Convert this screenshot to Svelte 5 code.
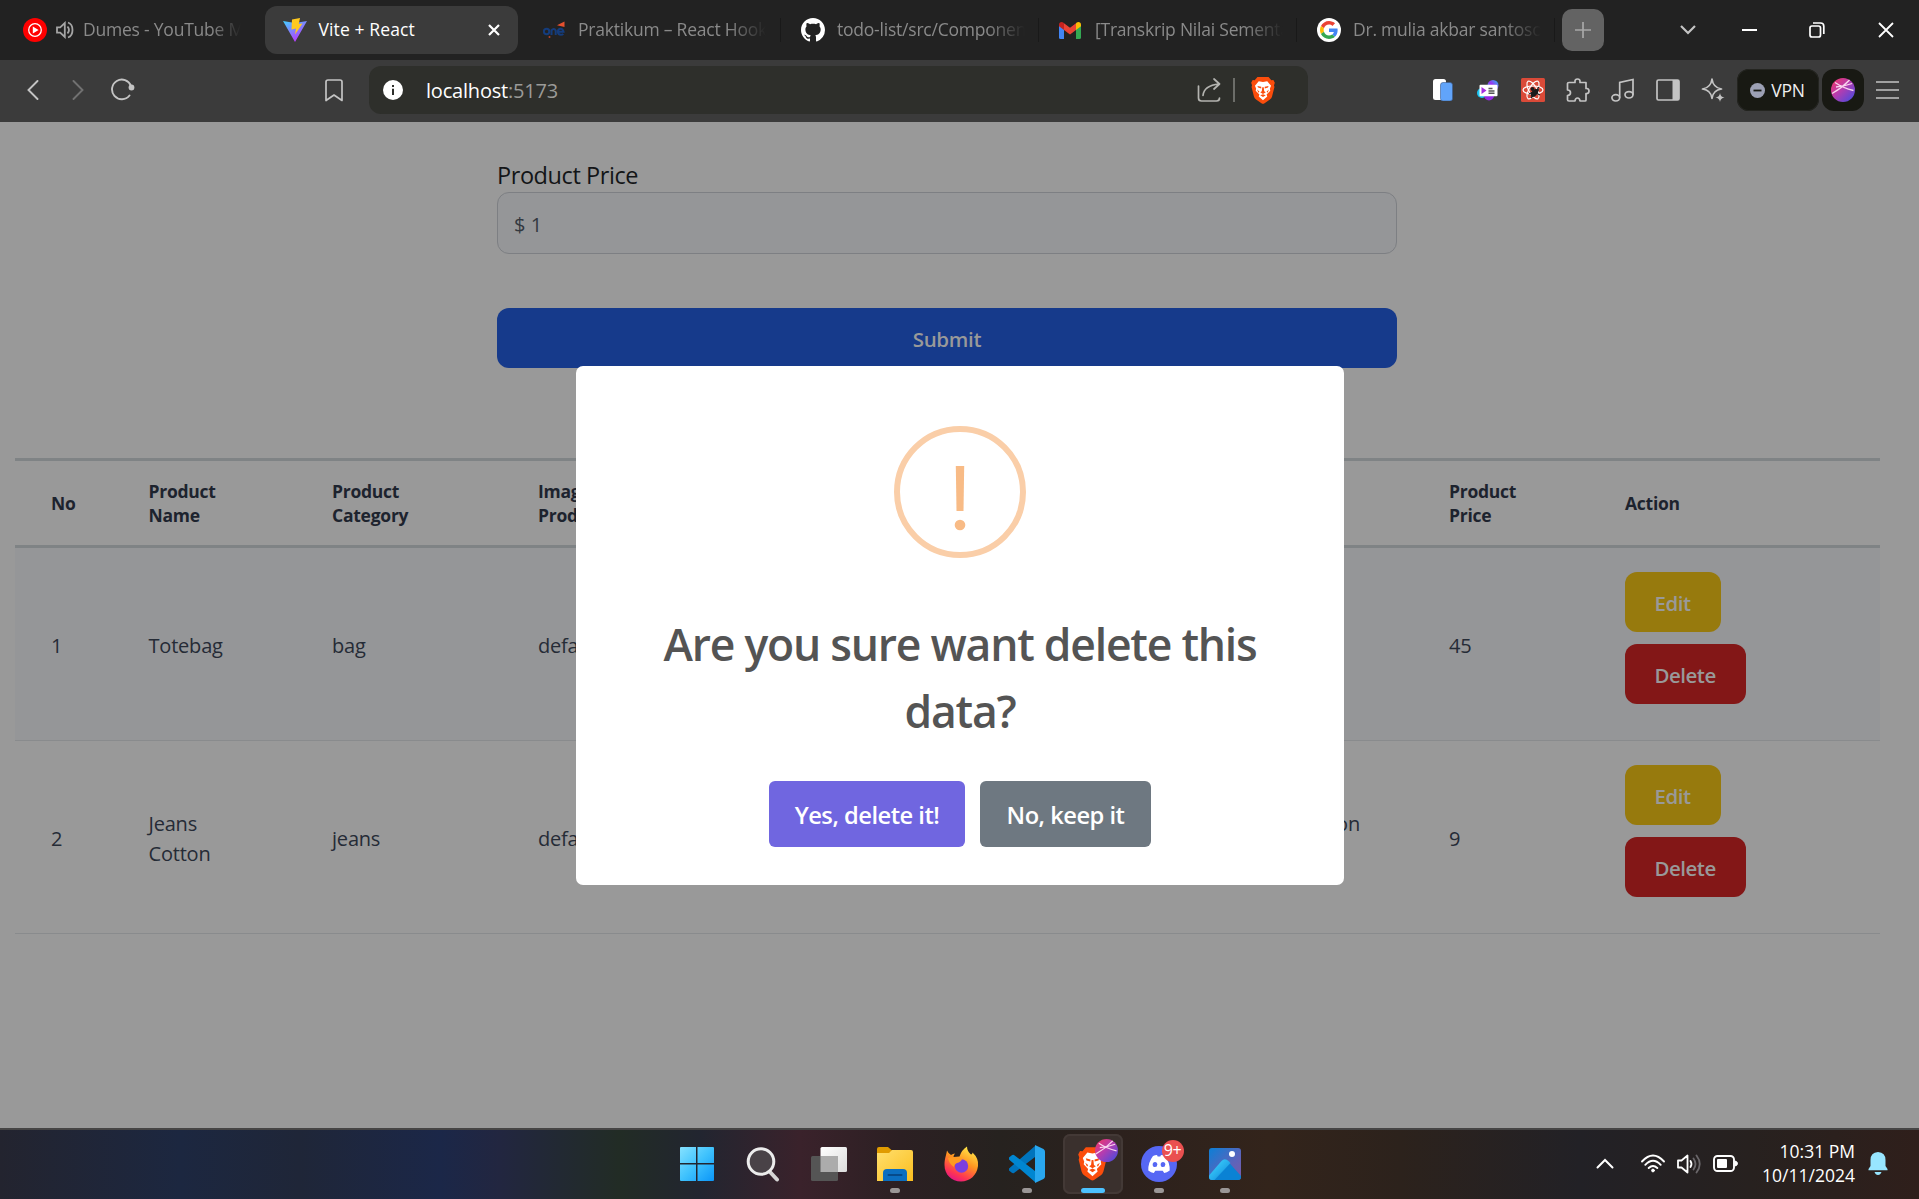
<script lang="ts">
  const tabs = [
    { icon: 'yt', title: 'Dumes - YouTube M', cls: 'first' },
    { icon: 'vite', title: 'Vite + React', cls: 'active' },
    { icon: 'one', title: 'Praktikum – React Hook', cls: 't3' },
    { icon: 'github', title: 'todo-list/src/Componen', cls: 't4' },
    { icon: 'gmail', title: '[Transkrip Nilai Sementa', cls: 't5' },
    { icon: 'google', title: 'Dr. mulia akbar santoso', cls: 't6' }
  ];
  const rows = [
    { no: 1, name: ['Totebag'], category: 'bag', image: 'default.jpg', desc: ['Bag'], price: 45 },
    { no: 2, name: ['Jeans', 'Cotton'], category: 'jeans', image: 'default.jpg', desc: ['Jeans cotton', 'fabric'], price: 9 }
  ];
  const apps = ['windows', 'search', 'taskview', 'folder', 'firefox', 'vscode', 'brave', 'discord', 'photos'];
  const running = ['folder', 'vscode', 'discord', 'photos'];
</script>

{#snippet lion()}
  <path d="M7 1h12l3 3.4 2.2-.2 1.6 3-.9 2.6.5 2-2.6 10.300q-.6 2-2.300 3.200l-5.800 4q-1.700 1.200-3.400 0l-5.800-4q-1.700-1.200-2.300-3.200L.6 11.800l.5-2L.2 7.200l1.600-3 2.200.2z" fill="#fb4d0c" />
  <path d="M8.400 5.600l4.600.8 4.600-.8 4.100 4.800-1.300 3.200.5 2.100-4 4.200.7 2.100-4.600 4.200L8.400 22l.7-2.100-4-4.200.5-2.100-1.300-3.200z" fill="#fff" />
  <path d="M7 10.600l4.100 1v1.700L7.600 12.400zM19 10.600l-4.100 1v1.700l3.500-.9zM12.200 12h1.600l.5 4.400 1.700 1-3 1.800-3-1.800 1.700-1zM6.500 14.500l2.600 2-1 1.400zM19.500 14.500l-2.600 2 1 1.400zM10 20.700l3-1.200 3 1.200-3 2z" fill="#fb4d0c" />
{/snippet}

{#snippet globe()}
  <circle cx="12" cy="12" r="12" fill="url(#orb)" />
  <path d="M4 4.500Q12 10 22.500 12.500M18.500 2Q11 10 1 15.500M5 9Q13 8.500 21 5.500" fill="none" stroke="#f9d3ee" stroke-width="1.300" />
{/snippet}

<svg class="defs" width="0" height="0" aria-hidden="true">
  <defs>
    <linearGradient id="orb" x1="0" y1="0" x2="1" y2="1"><stop offset="0" stop-color="#f5365f" /><stop offset=".45" stop-color="#b83cae" /><stop offset="1" stop-color="#3b4ce4" /></linearGradient>
    <linearGradient id="vt" x1="0" y1="0" x2=".6" y2="1"><stop offset="0" stop-color="#41d1ff" /><stop offset="1" stop-color="#bd34fe" /></linearGradient>
    <linearGradient id="win" x1="0" y1="0" x2="1" y2="1"><stop offset="0" stop-color="#86e2ff" /><stop offset=".5" stop-color="#3fc2fd" /><stop offset="1" stop-color="#0b96f8" /></linearGradient>
    <linearGradient id="fold" x1="0" y1="0" x2="1" y2="1"><stop offset="0" stop-color="#ffdf6d" /><stop offset="1" stop-color="#fbbe1f" /></linearGradient>
    <linearGradient id="fox" x1=".8" y1="0" x2=".3" y2="1"><stop offset="0" stop-color="#fff14d" /><stop offset=".45" stop-color="#ff9420" /><stop offset=".8" stop-color="#ff3651" /><stop offset="1" stop-color="#e31587" /></linearGradient>
    <linearGradient id="ph" x1="0" y1="0" x2="1" y2="1"><stop offset="0" stop-color="#0b7fd6" /><stop offset=".6" stop-color="#5c64bb" /><stop offset="1" stop-color="#7b5aa8" /></linearGradient>
    <linearGradient id="hill" x1="0" y1="0" x2="1" y2="1"><stop offset="0" stop-color="#45dcff" /><stop offset=".55" stop-color="#25acec" /><stop offset="1" stop-color="#0a6fc6" /></linearGradient>
    <linearGradient id="wht" x1="0" y1="0" x2="1" y2="1"><stop offset="0" stop-color="#ffffff" /><stop offset="1" stop-color="#dcdcdc" /></linearGradient>
    <linearGradient id="ext" x1="0" y1="1" x2="1" y2="0"><stop offset="0" stop-color="#12d5f5" /><stop offset=".5" stop-color="#9a2ff0" /><stop offset="1" stop-color="#20c7f5" /></linearGradient>
  </defs>
</svg>

<div class="screen">
  <header class="tabbar">
    {#each tabs as tab}
      <div class="slot {tab.cls}">
        <div class="tab">
          <span class="fav">
            {#if tab.icon === 'yt'}
              <svg width="24" height="24" viewBox="0 0 24 24"><circle cx="12" cy="12" r="12" fill="#f00" /><circle cx="12" cy="12" r="6.300" fill="none" stroke="#fff" stroke-width="1.300" /><path d="M9.800 8.400v7.200L15.600 12z" fill="#fff" /></svg>
              <svg class="speaker" width="18" height="18" viewBox="0 0 18 18" fill="none" stroke="#a5a5a5" stroke-width="1.800"><path d="M1 6.300h3.200L8.800 2v14l-4.600-4.300H1z" /><path d="M11.500 5.500q3 3.500 0 7" /><path d="M12 1.500c6 2 6 13 0 15" /></svg>
            {:else if tab.icon === 'vite'}
              <svg width="24" height="24" viewBox="0 0 24 24"><path d="M0 3l12 2L24 3 12 24z" fill="url(#vt)" /><path d="M9 1.500L17 0l-1.200 6 3.700-.6L12 16.500l1-6-4.500 1z" fill="#ffc91f" /></svg>
            {:else if tab.icon === 'one'}
              <svg width="22" height="18" viewBox="0 0 22 18"><g fill="none" stroke="#143c7c" stroke-width="2"><circle cx="3.600" cy="10.500" r="2.700" /><path d="M8.500 14V9.300q2.500-2.600 4.200.3V14M15 10.700h5.500q-.6-3.200-3-3-2.600.2-2.600 3 .1 3 3 3.100 1.500 0 2.400-1" /></g><path d="M14 4.200L21.500.5V6z" fill="#e5502f" /><circle cx="6.500" cy="16" r="1" fill="#b64329" /></svg>
            {:else if tab.icon === 'github'}
              <svg width="24" height="24" viewBox="0 0 16 16"><path fill="#fff" d="M8 0C3.580 0 0 3.580 0 8c0 3.540 2.290 6.530 5.470 7.590.4.070.55-.17.55-.38 0-.19-.01-.82-.01-1.490-2.010.37-2.530-.49-2.690-.94-.09-.23-.48-.94-.82-1.130-.28-.15-.68-.52-.01-.53.63-.01 1.080.58 1.230.82.72 1.210 1.870.87 2.330.66.07-.52.28-.87.51-1.070-1.780-.2-3.640-.89-3.640-3.950 0-.87.31-1.590.82-2.150-.08-.2-.36-1.020.08-2.120 0 0 .67-.21 2.200.82.64-.18 1.320-.27 2-.27s1.360.09 2 .27c1.530-1.040 2.200-.82 2.200-.82.44 1.100.16 1.920.08 2.120.51.56.82 1.270.82 2.150 0 3.070-1.870 3.750-3.650 3.950.29.25.54.73.54 1.480 0 1.070-.01 1.930-.01 2.200 0 .21.15.46.55.38A8.010 8.010 0 0016 8c0-4.420-3.580-8-8-8z" /></svg>
            {:else if tab.icon === 'gmail'}
              <svg width="22" height="17" viewBox="0 0 22 17"><path d="M0 3v12.500Q0 17 1.500 17H5V7z" fill="#4285f4" /><path d="M22 3v12.500q0 1.500-1.500 1.500H17V7z" fill="#34a853" /><path d="M17 1.500V8l5-3.800V2.500C22 0 19.200-.7 17.400.8z" fill="#fbbc04" /><path d="M5 1.500V8L0 4.200V2.500C0 0 2.800-.7 4.600.8z" fill="#c5221f" /><path d="M5 1.200l6 4.600 6-4.600V8l-6 4.600L5 8z" fill="#ea4335" /></svg>
            {:else}
              <svg width="24" height="24" viewBox="0 0 24 24"><circle cx="12" cy="12" r="12" fill="#fff" /><g transform="translate(3 3) scale(.375)"><path fill="#ea4335" d="M24 9.500c3.540 0 6.710 1.220 9.210 3.600l6.850-6.850C35.900 2.380 30.470 0 24 0 14.620 0 6.510 5.380 2.560 13.220l7.980 6.190C12.430 13.720 17.740 9.500 24 9.500z" /><path fill="#4285f4" d="M46.980 24.550c0-1.570-.15-3.090-.38-4.550H24v9.020h12.940c-.58 2.960-2.260 5.480-4.780 7.180l7.730 6c4.510-4.180 7.090-10.360 7.090-17.650z" /><path fill="#fbbc05" d="M10.530 28.590c-.48-1.450-.76-2.990-.76-4.590s.27-3.140.76-4.590l-7.980-6.190C.92 16.460 0 20.120 0 24s.92 7.540 2.560 10.780l7.970-6.190z" /><path fill="#34a853" d="M24 48c6.480 0 11.930-2.130 15.890-5.810l-7.730-6c-2.150 1.450-4.920 2.300-8.160 2.300-6.260 0-11.570-4.220-13.470-9.910l-7.980 6.190C6.510 42.620 14.620 48 24 48z" /></g></svg>
            {/if}
          </span>
          <span class="title">{tab.title}</span>
          {#if tab.cls === 'active'}
            <svg class="x" width="12" height="12" viewBox="0 0 12 12"><path d="M1 1l10 10M11 1L1 11" stroke="#fff" stroke-width="2.200" /></svg>
          {/if}
        </div>
      </div>
    {/each}
    <div class="plus"><svg width="18" height="18" viewBox="0 0 18 18"><path d="M9 1v16M1 9h16" stroke="#a8a8a8" stroke-width="1.700" /></svg></div>
    <div class="win">
      <svg width="16" height="10" viewBox="0 0 16 10"><path d="M1 1l7 7 7-7" fill="none" stroke="#c4c4c4" stroke-width="2.200" /></svg>
      <svg width="15" height="2" viewBox="0 0 15 2"><path d="M0 1h15" stroke="#fff" stroke-width="2" /></svg>
      <svg width="16" height="16" viewBox="0 0 16 16" fill="none" stroke="#fff" stroke-width="1.700"><rect x="1" y="4" width="10.500" height="11" rx="2" /><path d="M4 1h7.500q3.300 0 3.300 3.300V12" /></svg>
      <svg width="16" height="16" viewBox="0 0 16 16"><path d="M1 1l14 14M15 1L1 15" stroke="#fff" stroke-width="1.800" /></svg>
    </div>
  </header>

  <nav class="toolbar">
    <span class="ic"><svg width="12" height="20" viewBox="0 0 12 20"><path d="M10.500 1L1.500 10l9 9" fill="none" stroke="#c4c4c4" stroke-width="1.900" stroke-linecap="round" /></svg></span>
    <span class="ic"><svg width="12" height="20" viewBox="0 0 12 20"><path d="M1.500 1l9 9-9 9" fill="none" stroke="#717171" stroke-width="1.900" stroke-linecap="round" /></svg></span>
    <span class="ic"><svg width="24" height="24" viewBox="0 0 24 24"><path d="M18.500 17.500A9.800 9.800 0 1 1 20 8" fill="none" stroke="#c4c4c4" stroke-width="1.900" stroke-linecap="round" /><circle cx="20.500" cy="9.500" r="2.900" fill="#c4c4c4" /></svg></span>
    <span class="ic mark"><svg width="18" height="23" viewBox="0 0 18 23"><path d="M1 21.500V3q0-2 2-2h12q2 0 2 2v18.500L9 16z" fill="none" stroke="#c4c4c4" stroke-width="1.700" stroke-linejoin="round" /></svg></span>
    <div class="url">
      <svg width="20" height="20" viewBox="0 0 20 20"><circle cx="10" cy="10" r="10" fill="#fff" /><path d="M10 8.700V15M10 5v2" stroke="#2e2f2b" stroke-width="2" /></svg>
      <span class="addr">localhost<i>:5173</i></span>
      <svg class="share" width="24" height="24" viewBox="0 0 24 24" fill="none" stroke="#b4b4b0" stroke-width="1.700" stroke-linecap="round" stroke-linejoin="round"><path d="M1.500 8v12q0 3 3 3h15q3 0 3-3M6 17.500Q7 7.500 22 6M17 1l5.500 5L17 11" /></svg>
      <span class="vr"></span>
      <svg width="24" height="28" viewBox="0 0 26 30">{@render lion()}</svg>
    </div>
    <div class="exts">
      <span class="ic"><svg width="20" height="22" viewBox="0 0 20 22"><rect x="0" y="0" width="13" height="21" rx="2.500" fill="#fff" /><rect x="7.500" y="3.500" width="12" height="18.500" rx="2.500" fill="#61a4fa" stroke="#3b5b8c" stroke-width=".6" /></svg></span>
      <span class="ic"><svg width="22" height="21" viewBox="0 0 22 21"><circle cx="16" cy="5.500" r="5.500" fill="url(#ext)" /><circle cx="5" cy="13" r="5" fill="#1bc5f3" /><circle cx="12" cy="15.500" r="5" fill="#9429e6" /><rect x="2.500" y="4.800" width="18" height="11.500" rx="1" fill="#fff" /><path d="M4.500 7v7l5-3.500z" fill="#a52de0" /><path d="M11.500 8.500h4M11.500 11h6M11.500 13.300h6" stroke="#555" stroke-width="1.500" /></svg></span>
      <span class="ic"><svg width="24" height="24" viewBox="0 0 24 24"><rect width="24" height="24" rx="1.500" fill="#da4a38" /><g fill="none" stroke="#fff" stroke-width="1.200"><ellipse cx="12" cy="12" rx="10" ry="4" /><ellipse cx="12" cy="12" rx="10" ry="4" transform="rotate(60 12 12)" /><ellipse cx="12" cy="12" rx="10" ry="4" transform="rotate(120 12 12)" /></g><ellipse cx="13.500" cy="15" rx="2.800" ry="4.500" transform="rotate(40 13.500 15)" fill="#1b1b1b" /><circle cx="11.500" cy="11" r="2" fill="#1b1b1b" /><path d="M8 16l4-2M10 20l3-4M14 12l4 0M15 15l4 2M16 12l2-3" stroke="#1b1b1b" stroke-width="1.300" /></svg></span>
      <span class="ic"><svg width="24" height="24" viewBox="0 0 24 24" fill="none" stroke="#c4c4c4" stroke-width="1.700" stroke-linejoin="round"><path d="M3 4.500h6V4q-.3-3 2.500-3T14 4v.5h6v6h.8q2.200.3 2.200 2.600t-2.200 2.500H20V22q0 1-1 1h-5q-.3-3-2.500-3T9 23H3q-1.500 0-1.500-1.200v-4.300q3-.3 3-2.800t-3-2.700V5.500q0-1 1.500-1z" /></svg></span>
      <span class="ic"><svg width="24" height="24" viewBox="0 0 24 24" fill="none" stroke="#c4c4c4" stroke-width="1.700"><ellipse cx="4.800" cy="19.800" rx="3.900" ry="3.200" /><ellipse cx="18" cy="16.800" rx="4" ry="3.200" /><path d="M8.700 19.800V4.500L22 1.500v15.300" /></svg></span>
      <span class="ic"><svg width="24" height="22" viewBox="0 0 24 22"><rect x="1" y="1" width="22" height="20" rx="1.500" fill="none" stroke="#c4c4c4" stroke-width="1.700" /><path d="M16.500 1H23v20h-6.500z" fill="#c4c4c4" /></svg></span>
      <span class="ic"><svg width="24" height="24" viewBox="0 0 24 24"><path d="M11 1q1 8.500 9.500 10-8.500 1-9.500 9.500Q10 12 1.500 11 10 9.500 11 1z" fill="none" stroke="#c4c4c4" stroke-width="1.700" stroke-linejoin="round" /><path d="M19 15q.5 4 4.500 4.500-4 .5-4.500 4.500-.5-4-4.500-4.500 4-.5 4.500-4.500z" fill="#c4c4c4" /></svg></span>
    </div>
    <div class="vpn"><svg width="15" height="15" viewBox="0 0 15 15"><circle cx="7.500" cy="7.500" r="7.500" fill="#9ca0b4" /><path d="M3.500 7.500h8" stroke="#181913" stroke-width="1.800" /></svg><span>VPN</span></div>
    <div class="avatar"><svg width="24" height="24" viewBox="0 0 24 24">{@render globe()}</svg></div>
    <span class="ic"><svg width="23" height="18" viewBox="0 0 23 18"><path d="M0 1h23M0 9h23M0 17h23" stroke="#c4c4c4" stroke-width="1.700" /></svg></span>
  </nav>

  <main>
    <form class="form">
      <div class="label">Product Price</div>
      <div class="field">$ 1</div>
      <div class="submit">Submit</div>
    </form>

    <section class="table">
      <div class="row head">
        <span>No</span><span>Product<br />Name</span><span>Product<br />Category</span><span>Image<br />Product</span><span></span><span>Product<br />Price</span><span>Action</span>
      </div>
      {#each rows as r}
        <div class="row body" class:odd={r.no === 1}>
          <span class="cell">{r.no}</span>
          <span class="cell">{#each r.name as n}<div>{n}</div>{/each}</span>
          <span class="cell">{r.category}</span>
          <span class="cell">{r.image}</span>
          <span class="cell desc"><div class="lines">{#each r.desc as d}<div>{d}</div>{/each}</div></span>
          <span class="cell">{r.price}</span>
          <div class="acts"><b class="btn edit">Edit</b><b class="btn del">Delete</b></div>
        </div>
      {/each}
    </section>

    <div class="modal">
      <svg class="warn" width="132" height="132" viewBox="0 0 132 132"><circle cx="66" cy="66" r="63" fill="none" stroke="#facea8" stroke-width="6" /><path d="M61.800 40h8.400l-.7 45h-7z" fill="#f8bb86" /><circle cx="66" cy="99" r="5.300" fill="#f8bb86" /></svg>
      <h2>Are you sure want delete this data?</h2>
      <div class="choices"><div class="yes">Yes, delete it!</div><div class="no">No, keep it</div></div>
    </div>
  </main>

  <footer>
    <div class="apps">
      {#each apps as app}
        <div class="app" class:current={app === 'brave'}>
          {#if app === 'windows'}
            <svg width="36" height="36" viewBox="0 0 36 36"><path d="M2 1h15v16H1V2q0-1 1-1zM18.500 1H34q1 0 1 1v15H18.500zM1 18.500h16V35H2q-1 0-1-1zM18.500 18.500H35V34q0 1-1 1H18.500z" fill="url(#win)" /></svg>
          {:else if app === 'search'}
            <svg width="36" height="36" viewBox="0 0 36 36"><path d="M25 26l7 7.500" stroke="#d5d5d5" stroke-width="4" stroke-linecap="round" /><circle cx="16" cy="15.500" r="12.800" fill="#494247" stroke="#ececec" stroke-width="3" /></svg>
          {:else if app === 'taskview'}
            <svg width="36" height="36" viewBox="0 0 36 36"><rect x="9.500" y="1" width="26.500" height="25" rx="1.500" fill="url(#wht)" /><rect x="0" y="10" width="27" height="25" rx="1.500" fill="#555" /><path d="M9.500 10H27v16H9.500z" fill="#acacac" /></svg>
          {:else if app === 'folder'}
            <svg width="36" height="36" viewBox="0 0 36 36"><path d="M0 3q0-2 2-2h9l4 3.500v5H0z" fill="#e09b00" /><path d="M0 7h12l3-3h19q2 0 2 2v29H0z" fill="url(#fold)" /><path d="M6 35V27q0-4 4-4h16q4 0 4 4v8z" fill="#0b6ec0" /><path d="M11.500 29h13" stroke="#064a8a" stroke-width="2" stroke-linecap="round" /></svg>
          {:else if app === 'firefox'}
            <svg width="36" height="36" viewBox="0 0 36 36"><path d="M4 4.500q1 2.500 4 4.500 2-1.500 4-1.500-1.500 1.500-1.500 3.500l6-.5Q18.500 4 24 .500q0 4.500 4 8 1.500 0 1.500-2 6.500 6 5.500 13.500C34 29 27 35.500 18 35.500 8.500 35.500 1.500 28.500 1.500 19 1.500 13 3 10 4 4.500z" fill="url(#fox)" /><circle cx="18.500" cy="20" r="6.700" fill="#7b3ee0" /><path d="M5 12q5-2 8 0l6 1q-1 3-5 4-3 1-3 4-5-3-6-9z" fill="#ff9a22" /></svg>
          {:else if app === 'vscode'}
            <svg width="36" height="38" viewBox="0 0 36 38"><path d="M2.500 27.500L0 25.500v-2L26 1v11L5 28q-1.200.8-2.500-.5z" fill="#0074bd" /><path d="M2.500 10.500L0 12.500v2L26 37V26L5 10q-1.200-.8-2.500.5z" fill="#0086d1" /><path d="M26 0l8.500 4Q36 5 36 6.500v25q0 1.500-1.500 2.500L26 38z" fill="#29a7ef" /></svg>
          {:else if app === 'brave'}
            <svg width="29" height="36" viewBox="0 0 26 32"><g transform="scale(1 1.030)">{@render lion()}</g></svg>
            <svg class="orb" width="23" height="23" viewBox="0 0 24 24">{@render globe()}</svg>
          {:else if app === 'discord'}
            <svg width="36" height="36" viewBox="0 0 36 36"><circle cx="18" cy="18" r="18" fill="#5667f4" /><path d="M12 10q2-.8 4-1l.7 1.500h2.600L20 9q2 .2 4 1 5 6.500 4.700 14.500-3 2-5.500 2.500l-1.500-2.200h-7.400L12.800 27Q10 26.500 7.300 24.500 7 16.500 12 10z" fill="#fff" /><ellipse cx="14" cy="18.500" rx="2.300" ry="2.600" fill="#5667f4" /><ellipse cx="22" cy="18.500" rx="2.300" ry="2.600" fill="#5667f4" /></svg>
            <span class="badge">9+</span>
          {:else}
            <svg width="32" height="32" viewBox="0 0 32 32"><rect width="32" height="32" rx="3" fill="url(#ph)" /><path d="M1 27L13 13.500q3-3.500 6 0L32 28v1q0 3-3 3H4q-3 0-3-3z" fill="#0a82d4" /><path d="M0 27.500L12.500 13q3.300-3.500 7 0l2 2L5.500 32H3q-3 0-3-3z" fill="url(#hill)" /><circle cx="23" cy="6" r="3" fill="#fff" /></svg>
          {/if}
          {#if running.includes(app)}<i class="dot"></i>{/if}
          {#if app === 'brave'}<i class="dot on"></i>{/if}
        </div>
      {/each}
    </div>
    <div class="tray">
      <svg class="up" width="18" height="11" viewBox="0 0 18 11"><path d="M1.500 9.500L9 2l7.500 7.500" fill="none" stroke="#fff" stroke-width="2" stroke-linecap="round" /></svg>
      <svg class="wifi" width="24" height="19" viewBox="0 0 24 19" fill="none" stroke="#fff" stroke-width="1.900" stroke-linecap="round"><path d="M1 7.500q11-12 22 0M4.300 10.800q7.700-8 15.400 0M7.700 14q4.300-4 8.600 0" /><circle cx="12" cy="16.500" r="1.400" fill="#fff" stroke-width="1" /></svg>
      <svg class="vol" width="25" height="20" viewBox="0 0 25 20" fill="none" stroke="#fff" stroke-width="1.800" stroke-linecap="round"><path d="M1 6.500h3.500L10.500 1.500v17l-6-5H1z" stroke-linejoin="round" /><path d="M13.500 7q2 3 0 6" /><path d="M16.500 4.500q4 5.500 0 11M19.500 1.500q6.500 8.500 0 17" stroke="#6a676a" /></svg>
      <svg class="bat" width="25" height="17" viewBox="0 0 25 17"><rect x="1" y="1" width="20" height="15" rx="3.500" fill="none" stroke="#fff" stroke-width="1.900" /><rect x="4" y="4" width="10" height="9" rx="1" fill="#fff" /><path d="M22 6q2.500.5 2.500 2.500T22 11z" fill="#fff" stroke="#fff" /></svg>
      <div class="clock"><span class="hm">10:31 PM</span><span class="dmy">10/11/2024</span></div>
      <svg class="bell" width="20" height="23" viewBox="0 0 20 23"><path d="M10 0q7.500.5 7.500 8v6l2 3v1.300H.5V17l2-3V8Q2.500.5 10 0zM6.500 20h7q-1 3-3.500 3t-3.500-3z" fill="#98e6ff" /></svg>
    </div>
  </footer>
</div>

<style>
  :global(body) { margin: 0; background: #999; }
  .defs { position: absolute; }
  .screen { width: 1919px; height: 1199px; overflow: hidden; display: flex; flex-direction: column; font-family: 'Open Sans', 'Noto Sans', sans-serif; color: #111; }
  svg { display: block; flex: none; }
  i { font-style: normal; }

  .tabbar { height: 60px; background: #222; display: flex; align-items: center; padding-left: 7px; box-sizing: border-box; flex: none; }
  .slot { width: 258px; height: 48px; box-sizing: border-box; flex: none; display: flex; background: linear-gradient(#191919, #191919) no-repeat right 0 center / 1px 24px; }
  .slot.first, .slot.active { background: none; }
  .tab { width: 253px; height: 48px; display: flex; align-items: center; padding-left: 20px; box-sizing: border-box; border-radius: 12px; color: #8a8a8a; font-size: 17.5px; }
  .fav { width: 36px; display: flex; align-items: center; flex: none; }
  .title { width: 200px; flex: none; padding-bottom: 2px; white-space: nowrap; letter-spacing: -0.22px; -webkit-mask-image: linear-gradient(90deg, #000 150px, transparent 188px); mask-image: linear-gradient(90deg, #000 150px, transparent 188px); }
  .first .tab { padding-left: 16px; }
  .first .fav { width: 60px; gap: 9px; }
  .first .title { width: 170px; -webkit-mask-image: linear-gradient(90deg, #000 128px, transparent 158px); mask-image: linear-gradient(90deg, #000 128px, transparent 158px); }
  .active .tab { background: #3b3b3b; color: #fff; padding-left: 18px; }
  .active .fav { width: 35.5px; }
  .active .title { width: 169.5px; letter-spacing: 0.12px; -webkit-mask-image: none; mask-image: none; }
  .t3 .fav { width: 35px; }
  .plus { width: 42px; height: 42px; margin-left: 7px; border-radius: 10px; background: #636363; display: flex; align-items: center; justify-content: center; flex: none; }
  .win { flex: 1; display: grid; grid-template-columns: 59px 65px 70px 68px; padding-left: 54px; align-items: center; justify-items: center; }

  .toolbar { height: 62px; background: #3b3b3b; display: flex; align-items: center; padding: 0 0 2px 10.5px; box-sizing: border-box; flex: none; }
  .ic { width: 45px; display: flex; justify-content: center; flex: none; }
  .mark { margin-left: 166px; }
  .url { margin-left: 12.5px; width: 939px; height: 48px; box-sizing: border-box; padding: 0 33px 0 14px; background: #2e2f2b; border-radius: 12px; display: flex; align-items: center; flex: none; }
  .addr { flex: 1; margin-left: 23px; color: #fff; font-size: 20px; letter-spacing: -0.2px; }
  .addr i { color: #9b9b98; }
  .vr { width: 2px; height: 24px; background: #6c6d69; margin: 0 16px 0 12px; }
  .exts { margin-left: 112.5px; display: flex; align-items: center; }
  .vpn { margin-left: 1px; width: 82px; height: 42px; border-radius: 12px; background: #181913; display: flex; align-items: center; justify-content: center; gap: 6px; color: #f0f0f0; font-size: 17.5px; letter-spacing: -0.2px; flex: none; box-shadow: 0 0 0 1px #242520 inset; }
  .avatar { margin: 0 1px 0 3px; width: 42px; height: 42px; border-radius: 12px; background: #181913; display: flex; align-items: center; justify-content: center; flex: none; }

  main { height: 1006px; background: #999; position: relative; flex: none; display: flex; flex-direction: column; }
  .form { width: 900px; margin: 36px 0 0 497px; }
  .label { height: 34px; line-height: 34px; font-size: 23.5px; letter-spacing: -0.42px; color: #131517; }
  .field { height: 62px; box-sizing: border-box; border: 1px solid #7d7f83; border-radius: 12px; background: #959698; padding: 0 16px; line-height: 63px; font-size: 20px; color: #33383f; }
  .submit { margin-top: 54px; height: 60px; border-radius: 12px; background: #163a8b; color: #999; font-weight: 600; font-size: 20.5px; letter-spacing: -0.3px; line-height: 62px; text-align: center; }

  .table { width: 1865px; margin: 90px 0 0 15px; color: #252b36; font-size: 20px; }
  .row { display: grid; grid-template-columns: 97.500px 183.500px 206px 560px 351px 176px 1fr; padding-left: 36px; align-items: center; box-sizing: border-box; }
  .head { height: 90px; border-top: 3px solid #7f8385; border-bottom: 3px solid #7f8385; font-weight: 700; font-size: 17.5px; line-height: 24px; letter-spacing: -0.25px; color: #1d232e; }
  .body { height: 193px; border-bottom: 1px solid #898b8d; line-height: 30px; letter-spacing: -0.2px; }
  .cell { padding-top: 4px; }
  .odd { background: #959698; }
  .desc { width: 262px; }
  .lines { width: fit-content; margin-left: auto; }
  .odd .lines { margin-left: 0; }
  .acts { display: flex; flex-direction: column; align-items: flex-start; gap: 12px; padding-bottom: 12px; align-self: end; margin-bottom: 24px; }
  .btn { height: 60px; box-sizing: border-box; border-radius: 12px; padding: 0 29.5px; line-height: 62px; font-weight: 600; font-size: 20.5px; color: #999; letter-spacing: -0.5px; }
  .edit { background: #977a0d; width: 96px; }
  .del { background: #831717; width: 121px; }

  .modal { position: absolute; left: 576px; top: 244px; width: 768px; height: 519px; box-sizing: border-box; padding-top: 60px; background: #fff; border-radius: 7px; display: flex; flex-direction: column; align-items: center; }
  h2 { margin: 52px 0 0; width: 720px; padding: 0 50px; box-sizing: border-box; text-align: center; font-size: 44.5px; line-height: 67px; font-weight: 600; letter-spacing: -1.230px; color: #545454; }
  .choices { margin-top: 37px; display: flex; gap: 15px; }
  .yes, .no { height: 66px; line-height: 68px; border-radius: 6px; color: #fff; font-size: 23.7px; font-weight: 600; text-align: center; letter-spacing: -0.5px; }
  .yes { width: 196px; background: #7066e0; }
  .no { width: 171px; background: #6e7881; }

  footer { height: 71px; box-sizing: border-box; border-top: 2px solid #464545; background: linear-gradient(90deg, #23242f 0, #1c2740 180px, #1f2638 300px, #1b2748 440px, #222640 500px, #222c25 620px, #222530 700px, #3a222b 800px, #2c2023 900px, #26221f 1000px, #2c211d 1120px, #33241b 1270px, #2c221c 1400px, #222126 1580px, #27211f 1750px, #2f1f1b 1919px); display: flex; justify-content: space-between; flex: none; }
  .apps { display: flex; margin-left: 661.500px; }
  .app { width: 60px; height: 60px; box-sizing: border-box; margin: 4px 3px 0; border-radius: 7px; display: flex; align-items: center; justify-content: center; position: relative; left: 2px; }
  .current { background: #3a302d; box-shadow: 0 0 0 2px #433936 inset; }
  .dot { position: absolute; bottom: 1px; left: 25px; width: 10px; height: 5px; border-radius: 3px; background: #9a9696; }
  .dot.on { left: 18px; width: 24px; background: #4cc2ff; }
  .orb { position: absolute; left: 32px; top: 5px; }
  .badge { position: absolute; left: 33px; top: 6px; width: 22px; height: 22px; border-radius: 11px; background: #ea5050; color: #fff; font-size: 16px; line-height: 21px; letter-spacing: -0.5px; text-align: center; }
  .tray { display: flex; align-items: center; padding-right: 31px; padding-bottom: 2px; color: #fff; }
  .wifi { margin-left: 27px; }
  .vol { margin-left: 12px; }
  .bat { margin-left: 10.500px; }
  .clock { width: 117.500px; padding-bottom: 1px; display: flex; flex-direction: column; align-items: flex-end; font-size: 17.5px; line-height: 24px; }
  .bell { margin-left: 13px; }
</style>
